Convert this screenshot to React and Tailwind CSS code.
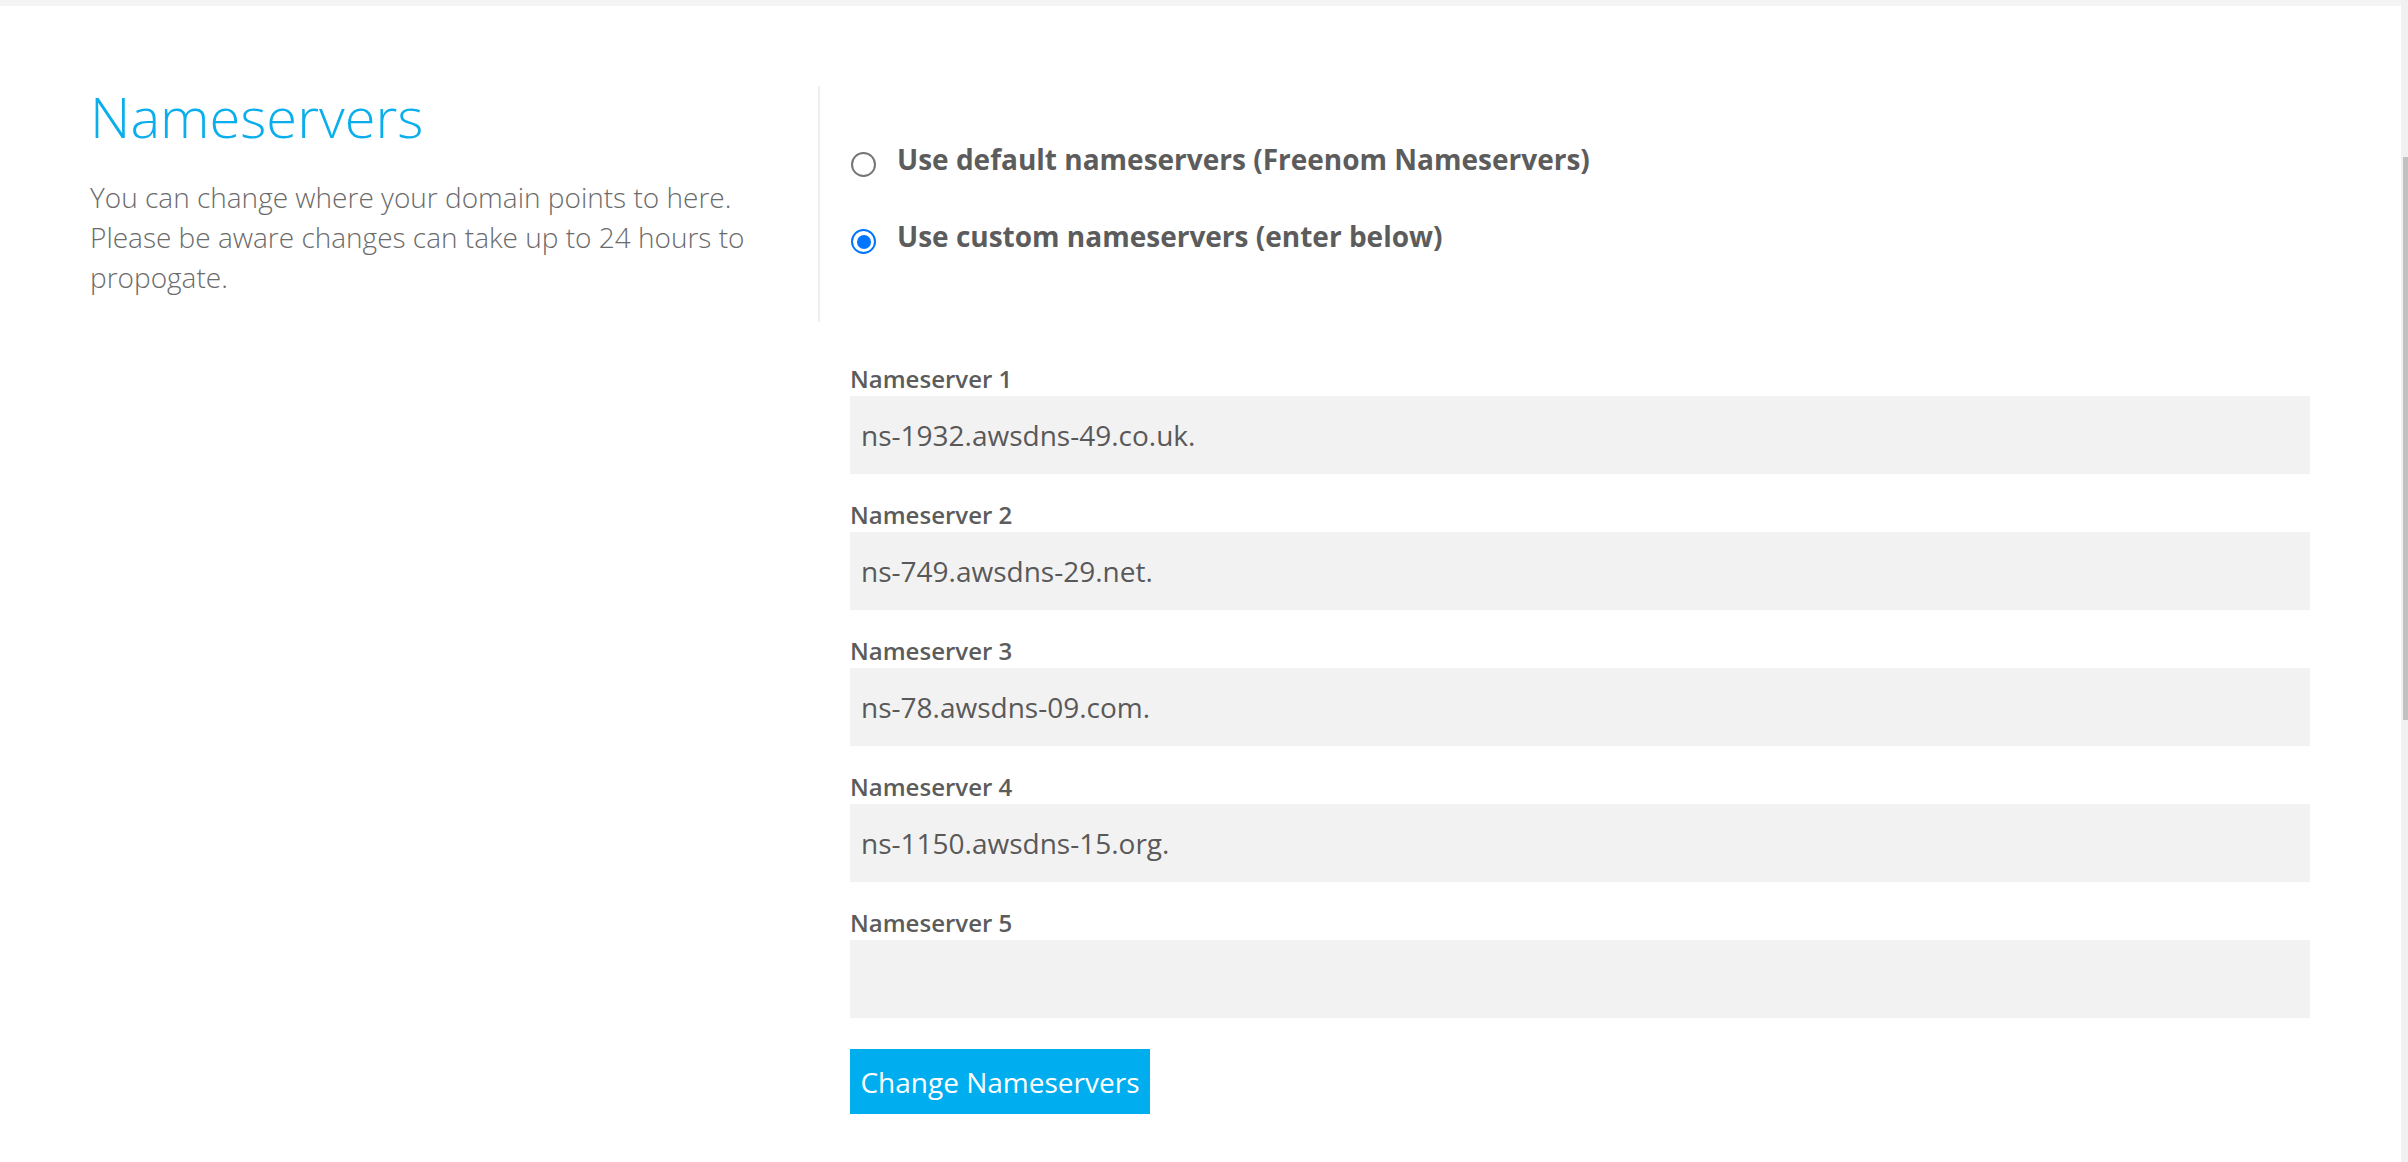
import React from 'react';

const servers = [
  'ns-1932.awsdns-49.co.uk.',
  'ns-749.awsdns-29.net.',
  'ns-78.awsdns-09.com.',
  'ns-1150.awsdns-15.org.',
  '',
];

function Radio({ checked }) {
  if (checked) {
    return (
      <span className="mt-[13px] flex h-[25px] w-[25px] shrink-0 items-center justify-center rounded-full border-[2.5px] border-[#0075ff] bg-white">
        <span className="h-[14px] w-[14px] rounded-full bg-[#0075ff]" />
      </span>
    );
  }
  return <span className="mt-[13px] block h-[25px] w-[25px] shrink-0 rounded-full border-2 border-[#767676] bg-white" />;
}

export default function App() {
  const [mode, setMode] = React.useState('custom');
  const [values, setValues] = React.useState(servers);

  return (
    <div className="flex min-h-[1162px] w-full bg-white font-['Open_Sans',sans-serif]">
      <div className="flex-1">
        <div className="h-[6px] bg-[#f4f4f4]" />

        <div className="grid grid-cols-[728px_1fr] pl-[90px] pr-[91px] pt-[80px]">
          {/* Left: heading & help text */}
          <div className="pt-[2px]">
            <h1 className="text-[56px] font-light leading-none text-[#0aaeec]">Nameservers</h1>
            <p className="mt-[33px] w-[700px] text-[28px] font-light leading-[40px] text-[#6b6b6b]">
              You can change where your domain points to here. Please be aware changes can take up to 24 hours to propogate.
            </p>
          </div>

          {/* Right: mode choice */}
          <div className="h-[236px] border-l-2 border-[#eeeeee] pl-[31px] pt-[53px]">
            <label className="flex cursor-pointer items-start gap-[21px]" onClick={() => setMode('default')}>
              <Radio checked={mode === 'default'} />
              <span className="text-[28px] font-bold leading-[40px] text-[#5c5c5c]">
                Use default nameservers (Freenom Nameservers)
              </span>
            </label>
            <label className="mt-[37px] flex cursor-pointer items-start gap-[21px]" onClick={() => setMode('custom')}>
              <Radio checked={mode === 'custom'} />
              <span className="text-[28px] font-bold leading-[40px] text-[#5c5c5c]">
                Use custom nameservers (enter below)
              </span>
            </label>
          </div>

          <div />

          {/* Nameserver fields */}
          <div className="flex flex-col gap-[28px] pl-[32px] pt-[44px]">
            {values.map((v, i) => (
              <div key={i}>
                <div className="mb-[4px] text-[24px] font-semibold leading-[26px] text-[#5c5c5c]">
                  Nameserver {i + 1}
                </div>
                <input
                  value={v}
                  onChange={(e) => {
                    const next = [...values];
                    next[i] = e.target.value;
                    setValues(next);
                  }}
                  className="block h-[78px] w-full bg-[#f2f2f2] px-[11px] text-[28px] text-[#595959] outline-none"
                />
              </div>
            ))}
            <div className="pt-[3px]">
              <button className="h-[65px] w-[300px] bg-[#00aeef] text-[28px] text-white">Change Nameservers</button>
            </div>
          </div>
        </div>
      </div>

      {/* page scrollbar */}
      <div className="w-[7px] shrink-0 bg-[#f1f1f1] pl-[2px]">
        <div className="mt-[157px] h-[563px] w-[5px] bg-[#c1c1c1]" />
      </div>
    </div>
  );
}
